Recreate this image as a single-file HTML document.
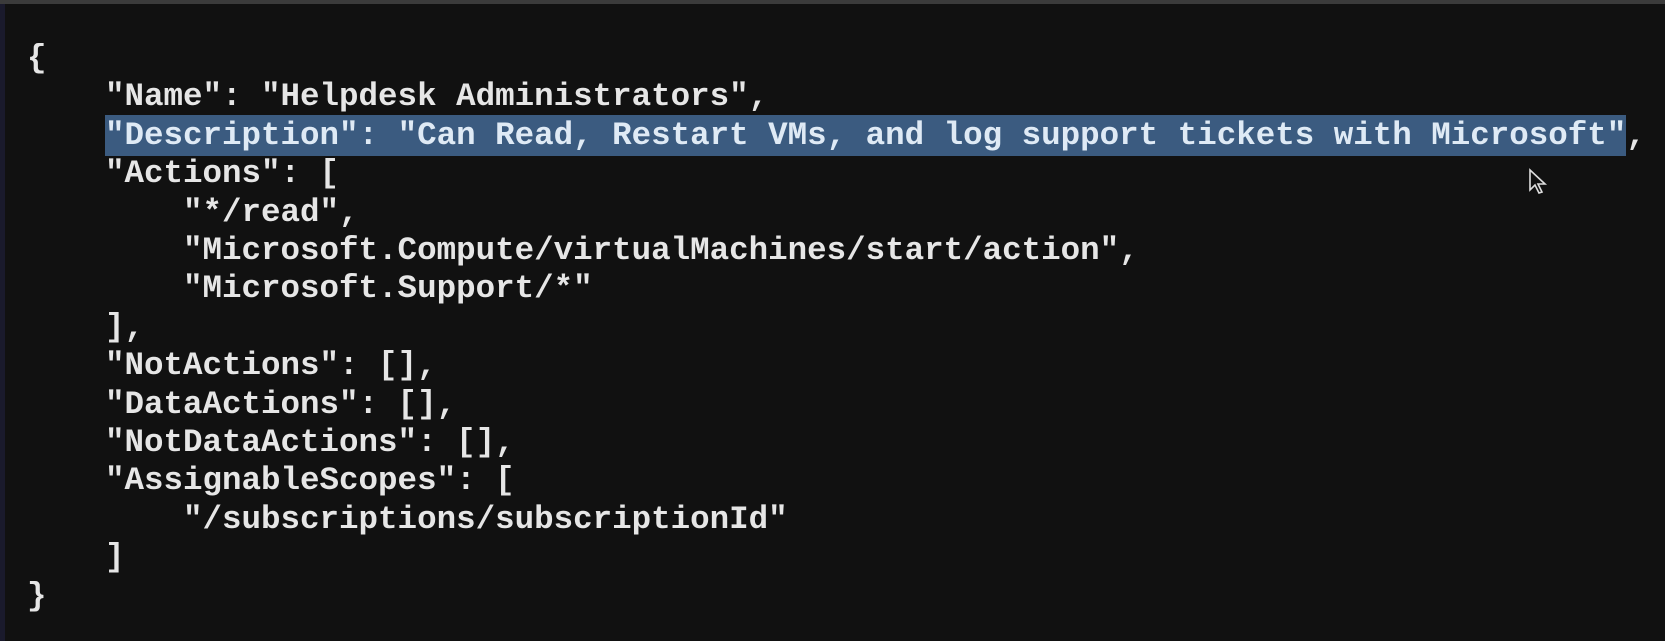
<!DOCTYPE html>
<html><head><meta charset="utf-8"><style>
html,body{margin:0;padding:0;}
body{width:1665px;height:641px;background:#111111;position:relative;overflow:hidden;}
.top{position:absolute;left:0;top:0;width:1665px;height:4px;background:#3b3b3b;}
.left{position:absolute;left:0;top:4px;width:5px;height:637px;background:#1a1a2c;}
pre{position:absolute;left:27px;top:40px;margin:0;font-family:"Liberation Mono",monospace;font-size:32.5px;line-height:38.4px;color:#e6e6e6;font-weight:bold;white-space:pre;}
.hl{background:#3b5b80;color:#dfeaf5;padding:2px 0;}
.cur{position:absolute;left:1528px;top:168px;}
</style></head><body>
<div class="top"></div><div class="left"></div>
<pre>{
    "Name": "Helpdesk Administrators",
    <span class="hl">"Description": "Can Read, Restart VMs, and log support tickets with Microsoft"</span>,
    "Actions": [
        "*/read",
        "Microsoft.Compute/virtualMachines/start/action",
        "Microsoft.Support/*"
    ],
    "NotActions": [],
    "DataActions": [],
    "NotDataActions": [],
    "AssignableScopes": [
        "/subscriptions/subscriptionId"
    ]
}</pre>
<svg class="cur" width="20" height="28" viewBox="0 0 20 28"><path d="M2 2 L2 22 L7 17 L11 25 L14 24 L10 16 L17 16 Z" fill="#111" stroke="#ddd" stroke-width="1.6"/></svg>
</body></html>
